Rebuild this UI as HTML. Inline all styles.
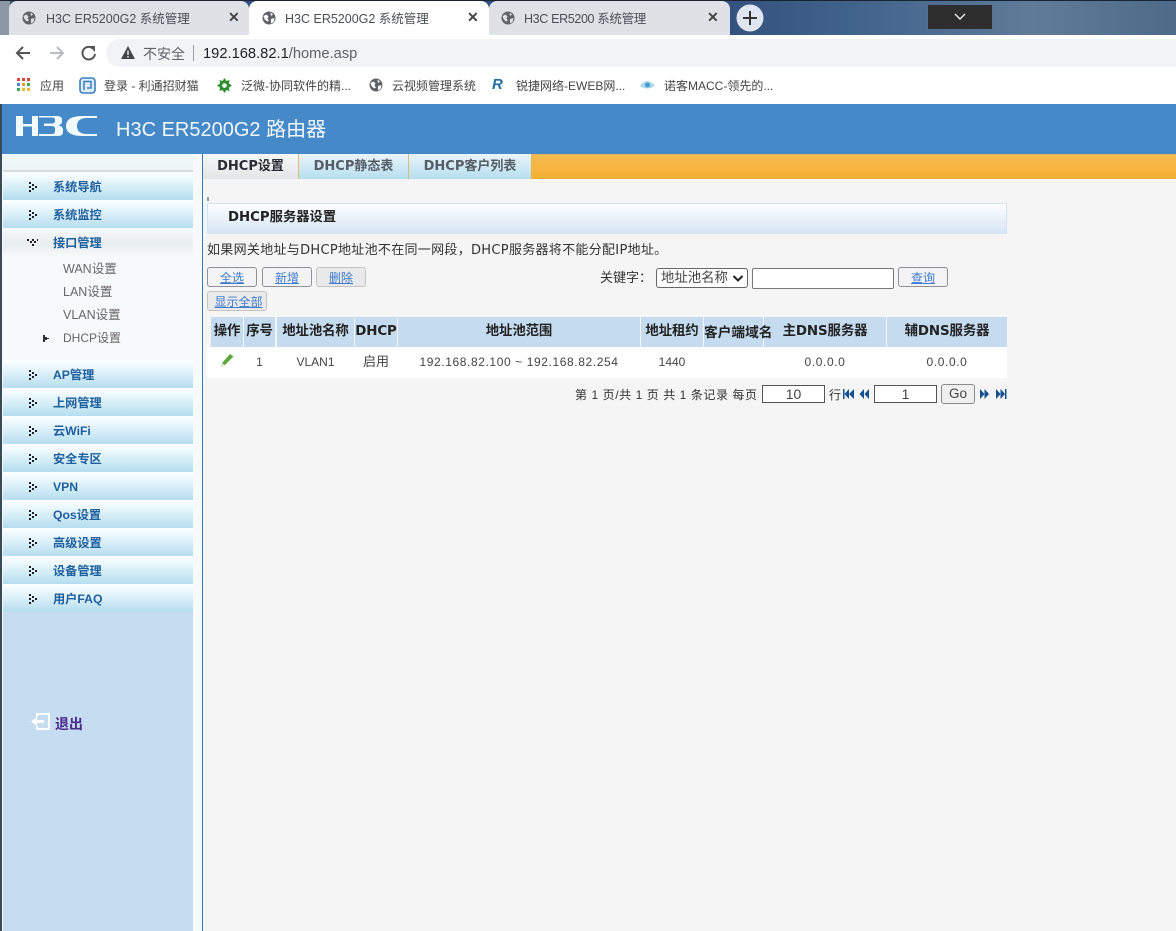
<!DOCTYPE html>
<html><head><meta charset="utf-8"><style>
html,body{margin:0;padding:0;width:1176px;height:931px;overflow:hidden;background:#fff}
body{position:relative;font-family:"Liberation Sans","Noto Sans CJK SC",sans-serif;font-size:12px;color:#333}
*{box-sizing:border-box}
.a{position:absolute;white-space:nowrap}
.t{position:absolute;white-space:nowrap;line-height:16px}
.tab{position:absolute;top:1px;height:34px;border-radius:8px 8px 0 0}
.tt{position:absolute;white-space:nowrap;font-size:12.5px;color:#4a4f55;top:11px;line-height:16px}
.x{position:absolute;top:9px;font-size:14px;font-weight:bold;color:#444;line-height:16px}
.bm{position:absolute;top:78px;font-size:12px;color:#444;line-height:16px;white-space:nowrap}
.nav{position:absolute;left:3px;width:190px;height:28px;background:linear-gradient(#fdffff 0,#e9f6fb 30%,#b4def0 100%)}
.nav span{position:absolute;left:50px;top:7px;font-size:12.2px;font-weight:bold;color:#1d5f9f;line-height:16px}
.nav svg{position:absolute;left:23px;top:9px}
.sub{position:absolute;left:63px;font-size:12.5px;color:#666;line-height:16px}
.btn{position:absolute;height:20px;border:1px solid #8e9296;border-radius:3px;background:#f3f3f3;color:#3f7bd0;font-size:12px;text-align:center;line-height:20px;text-decoration:underline}
.th{position:absolute;top:317px;height:30px;background:#c5dbef;font-family:"DejaVu Sans","Noto Sans CJK SC",sans-serif;font-weight:bold;color:#222;font-size:13.4px;text-align:center;line-height:30px;white-space:nowrap;letter-spacing:-.1px}
.td{position:absolute;top:347px;height:31px;line-height:30px;text-align:center;font-size:12px;color:#444;white-space:nowrap}
.inp{position:absolute;background:#fff;border:1px solid #555;text-align:center;font-size:14px;color:#444}
.tb{position:absolute;top:154px;height:25px;text-align:center;line-height:25px;font-family:"DejaVu Sans","Noto Sans CJK SC",sans-serif;font-size:13px;font-weight:bold}
</style></head><body>

<!-- Browser tab strip -->
<div class="a" style="left:0;top:0;width:1176px;height:35px;background:linear-gradient(90deg,#34527f 0,#34527f 62%,#3f628c 72%,#5f7b97 88%,#4d6a88 100%)"></div>
<div class="a" style="left:0;top:0;width:1176px;height:1px;background:#1b2330"></div>
<div class="a" style="left:0;top:1px;width:10px;height:34px;background:#8d98a6"></div>
<div class="tab" style="left:9px;width:240px;background:#dee1e6"></div>
<div class="tab" style="left:489px;width:241px;background:#dee1e6"></div>
<div class="tab" style="left:249px;width:240px;background:#fff"></div>

<svg class="a" style="left:22px;top:11px" width="14" height="14" viewBox="0 0 14 14"><circle cx="7" cy="7" r="6.500" fill="#5f6368"/><path d="M1.500 5l3-1.500 2 2-1 2 1.500 2-2 1-2.500-2.500zM8.500 1.500l2.500 2-2 1.500zM9 8l3.500-1-1 4-2.500 1.500z" fill="#dee1e6"/></svg>
<div class="tt" style="left:46px">H3C ER5200G2 系统管理</div>
<div class="x" style="left:228px">✕</div>
<svg class="a" style="left:262px;top:11px" width="14" height="14" viewBox="0 0 14 14"><circle cx="7" cy="7" r="6.500" fill="#5f6368"/><path d="M1.500 5l3-1.500 2 2-1 2 1.500 2-2 1-2.500-2.500zM8.500 1.500l2.500 2-2 1.500zM9 8l3.500-1-1 4-2.500 1.500z" fill="#fff"/></svg>
<div class="tt" style="left:285px">H3C ER5200G2 系统管理</div>
<div class="x" style="left:467px">✕</div>
<svg class="a" style="left:501px;top:11px" width="14" height="14" viewBox="0 0 14 14"><circle cx="7" cy="7" r="6.500" fill="#5f6368"/><path d="M1.500 5l3-1.500 2 2-1 2 1.500 2-2 1-2.500-2.500zM8.500 1.500l2.500 2-2 1.500zM9 8l3.500-1-1 4-2.500 1.500z" fill="#dee1e6"/></svg>
<div class="tt" style="left:524px;letter-spacing:-.35px">H3C ER5200 系统管理</div>
<div class="x" style="left:707px">✕</div>
<svg class="a" style="left:736px;top:4px" width="28" height="28" viewBox="0 0 28 28"><circle cx="14" cy="14" r="13.500" fill="#dfe6f2"/><path d="M14 7v14M7 14h14" stroke="#333" stroke-width="2"/></svg>
<div class="a" style="left:928px;top:5px;width:64px;height:24px;background:#2e2e2e"></div>
<svg class="a" style="left:953px;top:13px" width="14" height="9" viewBox="0 0 14 9"><path d="M2 1l5 5 5-5" fill="none" stroke="#eee" stroke-width="1.400"/></svg>

<!-- Address bar -->
<svg class="a" style="left:14px;top:44px" width="90" height="18" viewBox="0 0 90 18"><path d="M16 9H3M9 3L3 9l6 6" fill="none" stroke="#555" stroke-width="2"/><path d="M49 9H36M43 3l6 6-6 6" fill="none" stroke="#b8bbbf" stroke-width="2"/><path d="M79 4.500A6.300 6.300 0 1 0 81 10" fill="none" stroke="#555" stroke-width="2"/><path d="M75 2l6 0 0 6z" fill="#555"/></svg>
<div class="a" style="left:106px;top:39px;width:1070px;height:28px;border-radius:14px 0 0 14px;background:#f1f3f4"></div>
<svg class="a" style="left:121px;top:46px" width="14" height="13" viewBox="0 0 14 13"><path d="M7 0l7 13H0z" fill="#444"/><path d="M6.300 4.500h1.400v4.500H6.300zM6.300 10h1.400v1.500H6.300z" fill="#f1f3f4"/></svg>
<div class="t" style="left:143px;top:46px;font-size:14px;color:#5f6368">不安全</div>
<div class="a" style="left:193px;top:45px;width:1px;height:16px;background:#9aa0a6"></div>
<div class="t" style="left:203px;top:46px;font-size:14.7px;color:#5f6368"><span style="color:#202124">192.168.82.1</span>/home.asp</div>

<!-- Bookmarks -->
<svg class="a" style="left:17px;top:78px" width="14" height="14" viewBox="0 0 14 14"><g fill="#d9483b"><rect x="0" y="0" width="3" height="3"/><rect x="5" y="0" width="3" height="3"/><rect x="10" y="0" width="3" height="3"/></g><g fill="#4a89dc"><rect x="0" y="5" width="3" height="3"/></g><g fill="#e0a030"><rect x="5" y="5" width="3" height="3"/></g><g fill="#3ba55d"><rect x="10" y="5" width="3" height="3"/><rect x="0" y="10" width="3" height="3"/></g><g fill="#e8b93c"><rect x="5" y="10" width="3" height="3"/><rect x="10" y="10" width="3" height="3"/></g></svg>
<div class="bm" style="left:40px">应用</div>
<svg class="a" style="left:79px;top:77px" width="17" height="17" viewBox="0 0 17 17"><rect x="1" y="1" width="15" height="15" rx="3" fill="#dcecf8" stroke="#3a7fc0" stroke-width="1.600"/><path d="M5 13V4.500h7V11H8" fill="none" stroke="#3a7fc0" stroke-width="1.500"/></svg>
<div class="bm" style="left:104px">登录 - 利通招财猫</div>
<svg class="a" style="left:217px;top:78px" width="15" height="15" viewBox="0 0 15 15"><path d="M7.500 0l2 3 3-1-.6 3.400 3 2.100-3 2.100.6 3.400-3-1-2 3-2-3-3 1 .6-3.400-3-2.100 3-2.100L2.500 2l3 1z" fill="#2f8f2f"/><circle cx="7.500" cy="7.500" r="2.300" fill="#fff"/></svg>
<div class="bm" style="left:241px">泛微-协同软件的精...</div>
<svg class="a" style="left:369px;top:78px" width="14" height="14" viewBox="0 0 14 14"><circle cx="7" cy="7" r="6.500" fill="#5f6368"/><path d="M1.500 5l3-1.500 2 2-1 2 1.500 2-2 1-2.500-2.500zM8.500 1.500l2.500 2-2 1.500zM9 8l3.500-1-1 4-2.500 1.500z" fill="#fff"/></svg>
<div class="bm" style="left:392px">云视频管理系统</div>
<div class="t" style="left:492px;top:77px;font-size:15px;font-weight:bold;font-style:italic;color:#1f6f9f">R</div>
<div class="bm" style="left:516px">锐捷网络-EWEB网...</div>
<svg class="a" style="left:640px;top:79px" width="15" height="12" viewBox="0 0 15 12"><path d="M0 7Q7-3 15 7Q7 12 0 7z" fill="#a9d8ee"/><circle cx="7.500" cy="6" r="2.500" fill="#4a9cc7"/></svg>
<div class="bm" style="left:664px">诺客MACC-领先的...</div>

<!-- Page -->
<div class="a" style="left:0;top:104px;width:1176px;height:827px;background:#f5f5f5"></div>
<div class="a" style="left:0;top:104px;width:1176px;height:50px;background:#4689c8"></div>
<svg class="a" style="left:15px;top:114px" width="84" height="24" viewBox="0 0 84 24"><g fill="#f2fbff"><path d="M1 2h7v8h9V2h6v20h-6V12.500H8V22H1z"/><path d="M24 2h18q5 0 5 4v1.500q0 3-4 4q5 .5 5 4.500v2q0 4-5 4H24v-2h13q3 0 3-3v-2q0-3-3-3H29v-2.500h8q3 0 3-2.500V6q0-2.500-3-2.500H24z"/><path d="M82 2v2H72q-10 0-10 8t10 8h10v2H68Q51 22 51 12T68 2z"/></g></svg>
<div class="t" style="left:116px;top:118px;font-size:20px;line-height:24px;color:#f0f8fc">H3C ER5200G2 路由器</div>

<!-- Sidebar -->
<div class="a" style="left:0;top:104px;width:2px;height:827px;background:#3a4a58"></div>
<div class="a" style="left:2px;top:154px;width:200px;height:777px;background:#f7fafb"></div>
<div class="a" style="left:3px;top:154px;width:190px;height:16px;background:linear-gradient(#eff8fa,#eef3f4)"></div>
<div class="a" style="left:3px;top:170px;width:190px;height:2px;background:#d5dddf"></div>
<div class="a" style="left:3px;top:612px;width:190px;height:319px;background:#c6dcf0"></div>
<div class="a" style="left:202px;top:154px;width:1px;height:777px;background:#2f7cb8"></div>

<div class="nav" style="top:172px"><span>系统导航</span><svg width="12" height="12" viewBox="0 0 12 12"><path d="M3 1h2v2H3zM6 3h2v2H6zM9 5h2v2H9zM6 7h2v2H6zM3 9h2v2H3zM3 5h2v2H3z" fill="#222"/></svg></div>
<div class="nav" style="top:200px"><span>系统监控</span><svg width="12" height="12" viewBox="0 0 12 12"><path d="M3 1h2v2H3zM6 3h2v2H6zM9 5h2v2H9zM6 7h2v2H6zM3 9h2v2H3zM3 5h2v2H3z" fill="#222"/></svg></div>
<div class="nav" style="top:228px;background:linear-gradient(#f7fafb 0,#e8edef 55%,#f5f8f9 100%)"><span>接口管理</span><svg width="12" height="12" viewBox="0 0 12 12"><path d="M1 2h2v2H1zM4 4h2v2H4zM6 7h2v2H6zM8 4h2v2H8zM11 2h1v2h-1zM6 2h2v2H6z" fill="#222"/></svg></div>
<div class="sub" style="top:261px">WAN设置</div>
<div class="sub" style="top:284px">LAN设置</div>
<div class="sub" style="top:307px">VLAN设置</div>
<svg class="a" style="left:43px;top:335px" width="7" height="7" viewBox="0 0 7 7"><path d="M0 0h2v2h2v1h2v1H4v1H2v2H0z" fill="#333"/></svg>
<div class="sub" style="top:330px;font-size:12px">DHCP设置</div>

<div class="nav" style="top:360px"><span>AP管理</span><svg width="12" height="12" viewBox="0 0 12 12"><path d="M3 1h2v2H3zM6 3h2v2H6zM9 5h2v2H9zM6 7h2v2H6zM3 9h2v2H3zM3 5h2v2H3z" fill="#222"/></svg></div>
<div class="nav" style="top:388px"><span>上网管理</span><svg width="12" height="12" viewBox="0 0 12 12"><path d="M3 1h2v2H3zM6 3h2v2H6zM9 5h2v2H9zM6 7h2v2H6zM3 9h2v2H3zM3 5h2v2H3z" fill="#222"/></svg></div>
<div class="nav" style="top:416px"><span>云WiFi</span><svg width="12" height="12" viewBox="0 0 12 12"><path d="M3 1h2v2H3zM6 3h2v2H6zM9 5h2v2H9zM6 7h2v2H6zM3 9h2v2H3zM3 5h2v2H3z" fill="#222"/></svg></div>
<div class="nav" style="top:444px"><span>安全专区</span><svg width="12" height="12" viewBox="0 0 12 12"><path d="M3 1h2v2H3zM6 3h2v2H6zM9 5h2v2H9zM6 7h2v2H6zM3 9h2v2H3zM3 5h2v2H3z" fill="#222"/></svg></div>
<div class="nav" style="top:472px"><span>VPN</span><svg width="12" height="12" viewBox="0 0 12 12"><path d="M3 1h2v2H3zM6 3h2v2H6zM9 5h2v2H9zM6 7h2v2H6zM3 9h2v2H3zM3 5h2v2H3z" fill="#222"/></svg></div>
<div class="nav" style="top:500px"><span>Qos设置</span><svg width="12" height="12" viewBox="0 0 12 12"><path d="M3 1h2v2H3zM6 3h2v2H6zM9 5h2v2H9zM6 7h2v2H6zM3 9h2v2H3zM3 5h2v2H3z" fill="#222"/></svg></div>
<div class="nav" style="top:528px"><span>高级设置</span><svg width="12" height="12" viewBox="0 0 12 12"><path d="M3 1h2v2H3zM6 3h2v2H6zM9 5h2v2H9zM6 7h2v2H6zM3 9h2v2H3zM3 5h2v2H3z" fill="#222"/></svg></div>
<div class="nav" style="top:556px"><span>设备管理</span><svg width="12" height="12" viewBox="0 0 12 12"><path d="M3 1h2v2H3zM6 3h2v2H6zM9 5h2v2H9zM6 7h2v2H6zM3 9h2v2H3zM3 5h2v2H3z" fill="#222"/></svg></div>
<div class="nav" style="top:584px"><span>用户FAQ</span><svg width="12" height="12" viewBox="0 0 12 12"><path d="M3 1h2v2H3zM6 3h2v2H6zM9 5h2v2H9zM6 7h2v2H6zM3 9h2v2H3zM3 5h2v2H3z" fill="#222"/></svg></div>

<svg class="a" style="left:31px;top:713px" width="20" height="17" viewBox="0 0 20 17"><path d="M6 4V1h12v15H6v-3" fill="none" stroke="#fff" stroke-width="2"/><path d="M0 8.500L6 4v3h7v3H6v3z" fill="#fff"/></svg>
<div class="t" style="left:55px;top:716px;font-size:14px;font-weight:bold;color:#4b2a8c">退出</div>

<!-- Tabs -->
<div class="a" style="left:203px;top:154px;width:973px;height:25px;background:linear-gradient(#f8bc50,#f6ae34)"></div>
<div class="a" style="left:530px;top:154px;width:646px;height:1px;background:#dcb469"></div>
<div class="tb" style="left:203px;width:96px;background:linear-gradient(#f6f8f8,#e3e6e6);border-right:1px solid #e0bc70;color:#2b2b33">DHCP设置</div>
<div class="tb" style="left:299px;width:110px;background:linear-gradient(#e9f5fa,#b6def0);border-right:1px solid #e0bc70;color:#555d66">DHCP静态表</div>
<div class="tb" style="left:409px;width:122px;background:linear-gradient(#e9f5fa,#b6def0);color:#555d66">DHCP客户列表</div>

<!-- Section heading -->
<div class="a" style="left:207px;top:197px;width:2px;height:4px;background:#999"></div>
<div class="a" style="left:207px;top:203px;width:800px;height:31px;background:linear-gradient(#fdfeff,#d6e6f6);border:1px solid #d2e2ee"></div>
<div class="t" style="left:228px;top:210px;font-family:'DejaVu Sans','Noto Sans CJK SC',sans-serif;font-size:13.3px;font-weight:bold;color:#222">DHCP服务器设置</div>
<div class="t" style="left:207px;top:243px;font-family:'DejaVu Sans','Noto Sans CJK SC',sans-serif;font-size:13px;color:#333;letter-spacing:.3px">如果网关地址与DHCP地址池不在同一网段，DHCP服务器将不能分配IP地址。</div>

<!-- Toolbar -->
<div class="btn" style="left:207px;top:267px;width:50px">全选</div>
<div class="btn" style="left:262px;top:267px;width:50px">新增</div>
<div class="btn" style="left:316px;top:267px;width:50px;border-color:#c4c4c4;background:#e9e9e9">删除</div>
<div class="btn" style="left:207px;top:291px;width:60px;border-color:#c4c4c4;background:#eaeaea;padding-left:3px">显示全部</div>
<div class="t" style="left:600px;top:270px;font-size:13px;color:#333">关键字：</div>
<div class="a" style="left:656px;top:268px;width:92px;height:20px;background:#fff;border:1px solid #666;border-radius:3px;font-size:13.400px;line-height:18px;padding-left:4px;color:#444">地址池名称</div>
<svg class="a" style="left:732px;top:275px" width="12" height="7" viewBox="0 0 12 7"><path d="M1.500 1L6 5.500 10.500 1" fill="none" stroke="#222" stroke-width="2"/></svg>
<div class="a" style="left:752px;top:268px;width:142px;height:21px;background:#fff;border:1px solid #777;border-radius:2px"></div>
<div class="btn" style="left:898px;top:267px;width:50px">查询</div>

<!-- Table -->
<div class="a" style="left:207px;top:347px;width:800px;height:31px;background:#fff"></div>
<div class="th" style="left:211px;width:32px">操作</div>
<div class="th" style="left:244px;width:31px">序号</div>
<div class="th" style="left:277px;width:77px">地址池名称</div>
<div class="th" style="left:355px;width:42px">DHCP</div>
<div class="th" style="left:398px;width:242px">地址池范围</div>
<div class="th" style="left:641px;width:62px">地址租约</div>
<div class="th" style="left:704px;width:59px"></div>
<div class="th" style="left:764px;width:122px">主DNS服务器</div>
<div class="th" style="left:887px;width:120px">辅DNS服务器</div>
<div class="t" style="left:704px;top:325px;font-size:13.700px;font-weight:bold;color:#222">客户端域名</div>

<svg class="a" style="left:220px;top:353px" width="15" height="15" viewBox="0 0 15 15"><path d="M1 14l1-4 8-9 3.500 2.500L5 12z" fill="#5aa83a"/><path d="M1 14l1-4 3 2z" fill="#d8e8c0"/></svg>
<div class="td" style="left:244px;width:31px">1</div>
<div class="td" style="left:277px;width:77px">VLAN1</div>
<div class="td" style="left:355px;width:42px;font-size:13px">启用</div>
<div class="td" style="left:398px;width:242px;letter-spacing:.6px">192.168.82.100 ~ 192.168.82.254</div>
<div class="td" style="left:641px;width:62px">1440</div>
<div class="td" style="left:764px;width:122px;letter-spacing:.6px">0.0.0.0</div>
<div class="td" style="left:887px;width:120px;letter-spacing:.6px">0.0.0.0</div>

<!-- Pagination -->
<div class="t" style="left:575px;top:387px;font-size:12px;color:#333;letter-spacing:.57px">第 1 页/共 1 页 共 1 条记录 每页</div>
<div class="inp" style="left:762px;top:385px;width:63px;height:18px;line-height:16px">10</div>
<div class="t" style="left:829px;top:387px;font-size:12px;color:#333">行</div>
<svg class="a" style="left:843px;top:389px" width="28" height="10" viewBox="0 0 28 10"><g fill="#14508f"><path d="M0 0h1.500v10H0zM6 0v10L1.500 5zM11 0v10L6 5z"/><path d="M21 0v10l-4.500-5zM26 0v10l-4.500-5z"/></g></svg>
<div class="inp" style="left:874px;top:385px;width:63px;height:18px;line-height:16px">1</div>
<div class="a" style="left:941px;top:384px;width:34px;height:20px;background:#efefef;border:1px solid #8a8a8a;border-radius:3px;text-align:center;line-height:18px;font-size:13.500px;color:#444">Go</div>
<svg class="a" style="left:980px;top:389px" width="27" height="10" viewBox="0 0 27 10"><g fill="#14508f"><path d="M0 0v10l4.500-5zM4.500 0v10L9 5z"/><path d="M16 0v10l4.500-5zM20.500 0v10L25 5zM25 0h1.500v10H25z"/></g></svg>
</body></html>
